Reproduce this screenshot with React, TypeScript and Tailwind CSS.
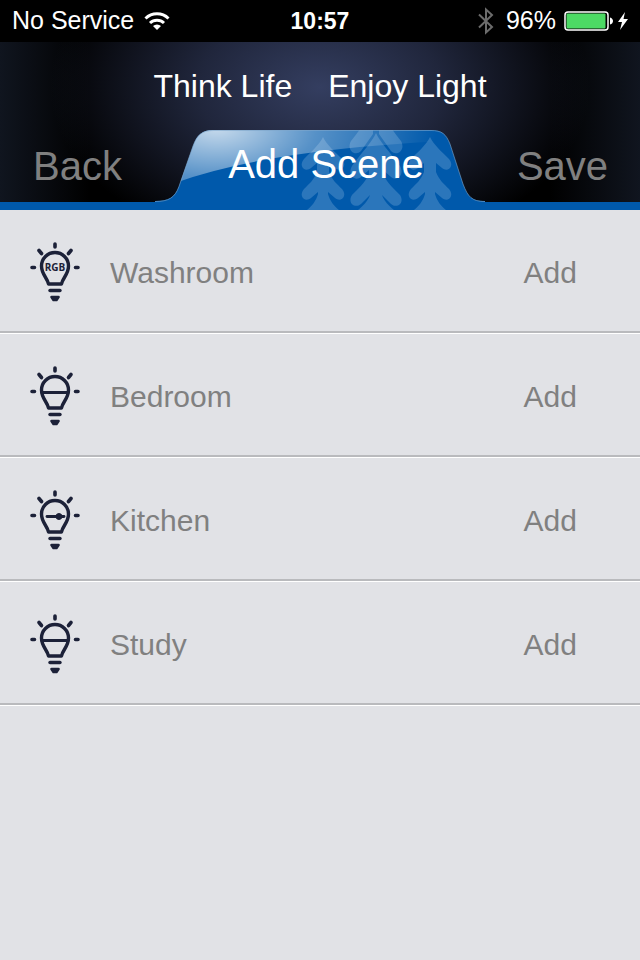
import React from "react";

const INK = "#1c2138";

type BulbKind = "rgb" | "split" | "dimmer";

interface Scene {
  name: string;
  bulb: BulbKind;
}

const scenes: Scene[] = [
  { name: "Washroom", bulb: "rgb" },
  { name: "Bedroom", bulb: "split" },
  { name: "Kitchen", bulb: "dimmer" },
  { name: "Study", bulb: "split" },
];

/** Light bulb with rays; the filament depends on the lamp type */
const BulbIcon: React.FC<{ kind: BulbKind }> = ({ kind }) => (
  <svg
    width="50"
    height="60"
    viewBox="0 0 50 60"
    fill="none"
    stroke={INK}
    strokeWidth="3.4"
    strokeLinecap="round"
    strokeLinejoin="round"
    aria-hidden="true"
  >
    <path d="M25 2v3M9 8.5l2.5 3M41 8.5l-2.5 3M2 25.5h2.5M45.5 25.5h2.5" strokeWidth="3.6" />
    <path d="M18.5 42c-1-6-7-9.500-7-18a13.500 13.500 0 0 1 27 0c0 8.500-6 12-7 18z" />
    <path d="M20 48.500h10" />
    <path d="M21.500 55h7l-2 3h-3z" fill={INK} strokeWidth="2.6" />
    {kind === "split" && <path d="M12 26.500h26" strokeWidth="3" />}
    {kind === "dimmer" && (
      <>
        <path d="M17 26.500h17" strokeWidth="2.8" />
        <circle cx="29" cy="26.500" r="3" fill={INK} strokeWidth="1" />
      </>
    )}
    {kind === "rgb" && (
      <text
        x="25"
        y="29"
        textAnchor="middle"
        fill={INK}
        stroke="none"
        className="font-['Open_Sans',sans-serif] text-[10px] font-bold"
      >
        RGB
      </text>
    )}
  </svg>
);

/** Both halves of a tree, from the path of its right half */
const Tree: React.FC<{ d: string; x: number }> = ({ d, x }) => (
  <>
    <path d={d} transform={`translate(${x} 0)`} />
    <path d={d} transform={`translate(${x} 0) scale(-1 1)`} />
  </>
);

const SMALL_TREE =
  "M0 7C4 15 11 21 19 29C25 36 18 43 12 38L6 33V42C9 50 14 54 19 59C25 66 18 73 12 68L5 62V64C7 71 11 76 16 80H0z";
const LARGE_TREE =
  "M3-4H14C17 1 21 6 25 11C30 20 21 27 15 21L3 4zM0 3C4 12 14 22 24 36C29 45 21 52 15 47L7 40V44C12 54 18 59 24 65C29 73 21 79 15 74L6 65C8 71 13 76 18 80H0z";

/** Glossy blue tab with pine trees behind the title */
const TabShape: React.FC = () => (
  <svg className="absolute inset-0 h-full w-full" viewBox="0 0 330 80" fill="none" aria-hidden="true">
    <defs>
      <clipPath id="tab">
        <path d="M0 80V71c14 0 20-4 24-15L38 16C42 5 47 0 58 0H276C287 0 291 4 295 14L308 54C313 67 317 71 330 71V80z" />
      </clipPath>
      <radialGradient
        id="gloss"
        gradientUnits="userSpaceOnUse"
        cx="62"
        cy="-4"
        r="220"
        gradientTransform="scale(1 .5)"
      >
        <stop offset="0" stopColor="#fff" stopOpacity=".78" />
        <stop offset=".45" stopColor="#fff" stopOpacity=".34" />
        <stop offset="1" stopColor="#fff" stopOpacity="0" />
      </radialGradient>
    </defs>
    <g clipPath="url(#tab)">
      <path d="M0 0h330v80H0z" fill="#0059ab" />
      <g fill="#2b76bb">
        <Tree d={SMALL_TREE} x={168} />
        <Tree d={LARGE_TREE} x={221} />
        <Tree d={SMALL_TREE} x={275} />
      </g>
      <path d="M20 53Q110 20 290 11V0H20z" fill="url(#gloss)" />
    </g>
    <path
      d="M0 71.500c14 0 20-4 24-15L38 16C42 5 47 .5 58 .5H276C287 .5 291 4 295 14L308 54C313 67 317 71.500 330 71.500"
      stroke="#7fa6cc"
      strokeOpacity=".6"
    />
  </svg>
);

const StatusBar: React.FC = () => (
  <div className="grid h-[42px] grid-cols-[1fr_auto_1fr] items-center bg-black px-3 text-[25px] text-white">
    <div className="flex items-center gap-2.5">
      <span>No Service</span>
      <svg width="26" height="19" viewBox="0 0 26 19" fill="none" stroke="#fff" strokeWidth="3" aria-hidden="true">
        <path d="M1.500 6.500a16.500 16.500 0 0 1 23 0M6 11a10.200 10.200 0 0 1 14 0" />
        <path d="M13 18l-4-4a5.800 5.800 0 0 1 8 0z" fill="#fff" stroke="none" />
      </svg>
    </div>
    <span className="text-[23px] font-bold">10:57</span>
    <div className="flex items-center justify-end">
      <svg
        className="mr-3"
        width="16"
        height="28"
        viewBox="0 0 16 28"
        fill="none"
        stroke="#6c6c6c"
        strokeWidth="2"
        aria-hidden="true"
      >
        <path d="M1 7.500l13 12.500-6 5.500v-23l6 5.500L1 20.500" />
      </svg>
      <span className="mr-2">96%</span>
      <svg width="64" height="20" viewBox="0 0 64 20" aria-hidden="true">
        <rect x="1" y="1" width="43" height="18" rx="3" fill="none" stroke="#fff" strokeWidth="1.5" />
        <rect x="2.5" y="2.5" width="39" height="15" rx="1" fill="#4cd964" />
        <path d="M46 6.500c4 1 4 6 0 7z" fill="#fff" />
        <path d="M61 1l-7 10h4l-2 8 8-11h-4.500z" fill="#fff" />
      </svg>
    </div>
  </div>
);

export default function App() {
  return (
    <div className="flex min-h-screen flex-col bg-[#e1e2e6] font-['Liberation_Sans',Arial,sans-serif]">
      <StatusBar />
      <header className="bg-[radial-gradient(ellipse_270px_170px_at_50%_45px,#343e60,#20263c_45%,transparent),linear-gradient(90deg,#10151f,#000_14%,#000_86%,#10151f)]">
        <p className="flex h-[88px] items-center justify-center gap-9 text-[32px] text-white">
          <span>Think Life</span>
          <span>Enjoy Light</span>
        </p>
        <div className="flex h-20">
          <div className="flex flex-1 items-center justify-center border-b-8 border-[#0059ab]">
            <button type="button" className="text-[40px] text-[#808080]">
              Back
            </button>
          </div>
          <div className="relative flex w-[330px] justify-center pl-3">
            <TabShape />
            <h1 className="relative pt-1 text-[40px] text-white">Add Scene</h1>
          </div>
          <div className="flex flex-1 items-center justify-center border-b-8 border-[#0059ab]">
            <button type="button" className="text-[40px] text-[#808080]">
              Save
            </button>
          </div>
        </div>
      </header>
      <ul>
        {scenes.map((scene) => (
          <li key={scene.name} className="border-b border-white">
            <div className="flex h-[123px] items-center border-b-2 border-[#b9babd] pt-0.5 pr-[63px] pl-[30px] text-[30px] text-[#808080]">
              <BulbIcon kind={scene.bulb} />
              <span className="flex-1 pt-0.5 pl-[30px]">{scene.name}</span>
              <button type="button" className="pt-0.5">
                Add
              </button>
            </div>
          </li>
        ))}
      </ul>
    </div>
  );
}
